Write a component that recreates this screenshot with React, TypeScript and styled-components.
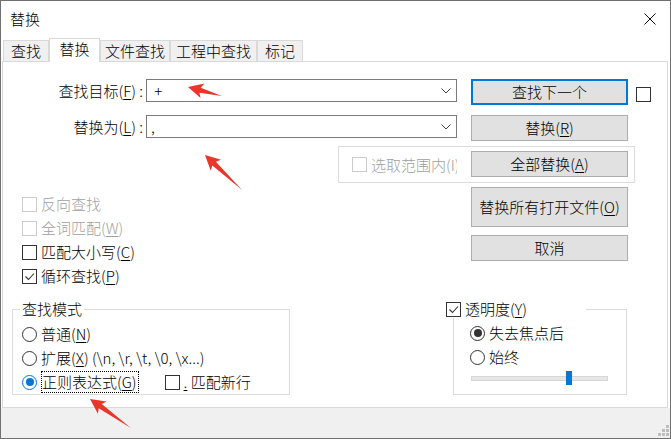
import React from 'react'
import styled, { createGlobalStyle } from 'styled-components'

const GlobalStyle = createGlobalStyle`
  html, body {
    margin: 0;
    padding: 0;
    background: #fff;
  }
  body {
    font-family: "Noto Sans CJK SC", "Noto Sans", sans-serif;
    font-size: 15px;
    font-weight: 300;
    color: #000;
  }
`

const tabs = [
  { label: '查找', width: 46 },
  { label: '替换', width: 51, selected: true },
  { label: '文件查找', width: 70 },
  { label: '工程中查找', width: 87 },
  { label: '标记', width: 46 },
]

const arrows = [
  { x: 188, y: 87, angle: 14.8, length: 35 },
  { x: 205, y: 155, angle: 43.4, length: 51 },
  { x: 90, y: 399, angle: 35.3, length: 50 },
]

const Key = ({ k }: { k: string }) => (
  <>
    (<Mnemonic>{k}</Mnemonic>)
  </>
)

const Check = ({ checked, disabled }: { checked?: boolean; disabled?: boolean }) => (
  <CheckBox $disabled={disabled}>
    {checked && (
      <svg width='13' height='13' viewBox='0 0 13 13'>
        <polyline points='2.5,6.5 5.5,9.5 11,3.5' fill='none' stroke='#333' strokeWidth='1.1' />
      </svg>
    )}
  </CheckBox>
)

const App = () => {
  const opacity = 0.72

  return (
    <>
      <GlobalStyle />
      <Window>
        <TitleBar>
          <Title>替换</Title>
          <CloseButton aria-label='close'>
            <svg width='12' height='12' viewBox='0 0 12 12'>
              <path d='M0.5 0.5 L11.5 11.5 M11.5 0.5 L0.5 11.5' stroke='#111' strokeWidth='1' />
            </svg>
          </CloseButton>
        </TitleBar>

        <TabStrip>
          {tabs.map((t) => (
            <Tab key={t.label} $width={t.width} $selected={t.selected}>
              {t.label}
            </Tab>
          ))}
        </TabStrip>

        <Panel>
          <TopRow>
            <LeftColumn>
              <FieldRow>
                <FieldLabel>
                  查找目标<Key k='F' /> :
                </FieldLabel>
                <Combo>
                  <ComboText> +</ComboText>
                  <Chevron />
                </Combo>
              </FieldRow>
              <FieldRow $mt={13}>
                <FieldLabel>
                  替换为<Key k='L' /> :
                </FieldLabel>
                <Combo>
                  <ComboText>,</ComboText>
                  <Chevron />
                </Combo>
              </FieldRow>

              <ScopeGroup>
                <ScopeCheck>
                  <Check disabled />
                  <OptionText $disabled>选取范围内(I)</OptionText>
                </ScopeCheck>
              </ScopeGroup>

              <OptionList>
                <OptionRow>
                  <Check disabled />
                  <OptionText $disabled>反向查找</OptionText>
                </OptionRow>
                <OptionRow>
                  <Check disabled />
                  <OptionText $disabled>
                    全词匹配<Key k='W' />
                  </OptionText>
                </OptionRow>
                <OptionRow>
                  <Check />
                  <OptionText>
                    匹配大小写<Key k='C' />
                  </OptionText>
                </OptionRow>
                <OptionRow>
                  <Check checked />
                  <OptionText>
                    循环查找<Key k='P' />
                  </OptionText>
                </OptionRow>
              </OptionList>
            </LeftColumn>

            <ButtonColumn>
              <DialogButton $default>查找下一个</DialogButton>
              <DialogButton>
                替换<Key k='R' />
              </DialogButton>
              <DialogButton>
                全部替换<Key k='A' />
              </DialogButton>
              <DialogButton $tall>
                替换所有打开文件<Key k='O' />
              </DialogButton>
              <DialogButton $mt={-2}>取消</DialogButton>
            </ButtonColumn>

            <SideCheck>
              <Check />
            </SideCheck>
          </TopRow>

          <BottomRow>
            <ModeGroup>
              <GroupLegend>查找模式</GroupLegend>
              <RadioRow>
                <Radio />
                <OptionText>
                  普通<Key k='N' />
                </OptionText>
              </RadioRow>
              <RadioRow>
                <Radio />
                <OptionText>
                  扩展<Key k='X' /> (\n, \r, \t, \0, \x...)
                </OptionText>
              </RadioRow>
              <RadioRow>
                <Radio $checked $accent='#0078d7' />
                <FocusText>
                  正则表达式<Key k='G' />
                </FocusText>
                <NewlineCheck>
                  <Check />
                  <OptionText>
                    <Mnemonic>.</Mnemonic> 匹配新行
                  </OptionText>
                </NewlineCheck>
              </RadioRow>
            </ModeGroup>

            <OpacityGroup>
              <OpacityLegend>
                <Check checked />
                <OptionText>
                  透明度<Key k='Y' />
                </OptionText>
              </OpacityLegend>
              <RadioRow>
                <Radio $checked $accent='#333' />
                <OptionText>失去焦点后</OptionText>
              </RadioRow>
              <RadioRow>
                <Radio />
                <OptionText>始终</OptionText>
              </RadioRow>
              <SliderTrack>
                <SliderThumb style={{ left: `${Math.round(opacity * 131)}px` }} />
              </SliderTrack>
            </OpacityGroup>
          </BottomRow>
        </Panel>

        <Footer>
          <svg width='12' height='12' viewBox='0 0 12 12'>
            <rect x='9' y='0' width='3' height='3' fill='#bdbdbd' />
            <rect x='5' y='4' width='3' height='3' fill='#bdbdbd' />
            <rect x='9' y='4' width='3' height='3' fill='#bdbdbd' />
            <rect x='1' y='8' width='3' height='3' fill='#bdbdbd' />
            <rect x='5' y='8' width='3' height='3' fill='#bdbdbd' />
            <rect x='9' y='8' width='3' height='3' fill='#bdbdbd' />
          </svg>
        </Footer>

        <ArrowLayer width='671' height='439' viewBox='0 0 671 439'>
          {arrows.map((a, i) => (
            <polygon
              key={i}
              transform={`translate(${a.x} ${a.y}) rotate(${a.angle})`}
              points={`0,0 15,-7.5 12.5,-2.6 ${a.length},0 12.5,2.6 15,7.5`}
              fill='#e8362a'
            />
          ))}
        </ArrowLayer>
      </Window>
    </>
  )
}

const Window = styled.div`
  position: relative;
  width: 671px;
  height: 439px;
  box-sizing: border-box;
  border: 1px solid #707070;
  background: #fff;
  display: flex;
  flex-direction: column;
  overflow: hidden;
`

const TitleBar = styled.div`
  height: 36px;
  flex: none;
  display: flex;
  align-items: center;
  justify-content: space-between;
  padding: 0 14px 0 9px;
`

const Title = styled.span`
  font-size: 15px;
  line-height: 20px;
`

const CloseButton = styled.button`
  border: 0;
  background: transparent;
  padding: 0;
  width: 12px;
  height: 12px;
  display: flex;
`

const TabStrip = styled.div`
  height: 24px;
  flex: none;
  display: flex;
  align-items: flex-end;
  padding-left: 2px;
`

const Tab = styled.div<{ $width: number; $selected?: boolean }>`
  position: relative;
  z-index: ${(p) => (p.$selected ? 1 : 0)};
  box-sizing: border-box;
  width: ${(p) => p.$width}px;
  height: ${(p) => (p.$selected ? 24 : 21)}px;
  margin-bottom: ${(p) => (p.$selected ? -1 : 0)}px;
  padding-bottom: ${(p) => (p.$selected ? 3 : 0)}px;
  border: 1px solid #d9d9d9;
  border-bottom: none;
  background: ${(p) => (p.$selected ? '#fff' : '#f0f0f0')};
  display: flex;
  align-items: center;
  justify-content: center;
  font-size: 15px;
  line-height: 18px;
  white-space: nowrap;
`

const Panel = styled.div`
  flex: 1;
  margin: 0 2px 0 1px;
  border: 1px solid #d9d9d9;
  padding-top: 17px;
  display: flex;
  flex-direction: column;
`

const TopRow = styled.div`
  display: flex;
  align-items: flex-start;
`

const LeftColumn = styled.div`
  width: 454px;
  flex: none;
  display: flex;
  flex-direction: column;
`

const FieldRow = styled.div<{ $mt?: number }>`
  display: flex;
  align-items: center;
  height: 23px;
  margin-top: ${(p) => p.$mt ?? 0}px;
`

const FieldLabel = styled.span`
  width: 140px;
  flex: none;
  text-align: right;
  line-height: 20px;
  white-space: pre;
`

const Combo = styled.div`
  width: 311px;
  height: 23px;
  margin-left: 3px;
  box-sizing: border-box;
  border: 1px solid #7a7a7a;
  background: #fff;
  display: flex;
  align-items: center;
  justify-content: space-between;
  padding: 0 5px 0 4px;
`

const ComboText = styled.span`
  white-space: pre;
  line-height: 20px;
`

const Chevron = () => (
  <svg width='10' height='6' viewBox='0 0 10 6'>
    <polyline points='0.5,0.5 5,5 9.5,0.5' fill='none' stroke='#444' strokeWidth='1' />
  </svg>
)

const ScopeGroup = styled.div`
  margin: 8px 0 0 335px;
  width: 297px;
  height: 37px;
  flex: none;
  box-sizing: border-box;
  border: 1px solid #dcdcdc;
  padding-left: 13px;
  display: flex;
  align-items: center;
`

const ScopeCheck = styled.div`
  width: 105px;
  overflow: hidden;
  white-space: nowrap;
  display: flex;
  align-items: center;
  gap: 4px;
`

const OptionList = styled.div`
  margin: 9px 0 0 19px;
  display: flex;
  flex-direction: column;
`

const OptionRow = styled.div`
  height: 24px;
  display: flex;
  align-items: center;
  gap: 4px;
`

const OptionText = styled.span<{ $disabled?: boolean }>`
  line-height: 20px;
  white-space: pre;
  color: ${(p) => (p.$disabled ? '#a0a0a0' : '#000')};
`

const Mnemonic = styled.u`
  text-underline-offset: 2px;
`

const CheckBox = styled.span<{ $disabled?: boolean }>`
  width: 15px;
  height: 15px;
  flex: none;
  box-sizing: border-box;
  border: 1px solid ${(p) => (p.$disabled ? '#cccccc' : '#333')};
  background: #fff;
  display: flex;
  align-items: center;
  justify-content: center;
`

const ButtonColumn = styled.div`
  position: relative;
  z-index: 1;
  width: 157px;
  flex: none;
  margin-left: 14px;
  display: flex;
  flex-direction: column;
  gap: 10px;
`

const DialogButton = styled.button<{ $default?: boolean; $tall?: boolean; $mt?: number }>`
  height: ${(p) => (p.$tall ? 40 : 26)}px;
  margin-top: ${(p) => p.$mt ?? 0}px;
  box-sizing: border-box;
  border: ${(p) => (p.$default ? '2px solid #0078d7' : '1px solid #adadad')};
  background: #e1e1e1;
  font-family: inherit;
  font-size: 15px;
  font-weight: inherit;
  line-height: 20px;
  color: #000;
  padding: 0;
  white-space: nowrap;
`

const SideCheck = styled.div`
  margin: 8px 0 0 8px;
`

const BottomRow = styled.div`
  margin-top: 12px;
  display: flex;
  align-items: flex-start;
`

const GroupBox = styled.fieldset`
  margin: 0;
  min-width: 0;
  height: 95px;
  box-sizing: border-box;
  border: 1px solid #dcdcdc;
`

const ModeGroup = styled(GroupBox)`
  width: 278px;
  margin-left: 9px;
  padding: 4px 0 0 9px;
`

const GroupLegend = styled.legend`
  padding: 0 2px;
  margin-left: -2px;
  line-height: 18px;
  font-size: 15px;
`

const RadioRow = styled.div`
  height: 24px;
  display: flex;
  align-items: center;
  gap: 4px;
`

const Radio = styled.span<{ $checked?: boolean; $accent?: string }>`
  width: 15px;
  height: 15px;
  flex: none;
  box-sizing: border-box;
  border-radius: 50%;
  border: 1px solid ${(p) => (p.$checked ? p.$accent : '#333')};
  background: #fff;
  display: flex;
  align-items: center;
  justify-content: center;

  &::after {
    content: '';
    display: ${(p) => (p.$checked ? 'block' : 'none')};
    width: 8px;
    height: 8px;
    border-radius: 50%;
    background: ${(p) => p.$accent};
  }
`

const FocusText = styled.span`
  border: 1px dotted #000;
  line-height: 20px;
  white-space: pre;
  padding-right: 1px;
`

const NewlineCheck = styled.span`
  margin-left: 22px;
  display: flex;
  align-items: center;
  gap: 4px;
`

const OpacityGroup = styled(GroupBox)`
  width: 174px;
  margin-left: 163px;
  padding: 3px 0 0 16px;
`

const OpacityLegend = styled.legend`
  width: 140px;
  margin-left: -24px;
  padding: 0;
  height: 18px;
  display: flex;
  align-items: center;
  gap: 4px;
  background: #fff;
`

const SliderTrack = styled.div`
  position: relative;
  width: 137px;
  height: 5px;
  margin: 7px 0 0 1px;
  box-sizing: border-box;
  border: 1px solid #d6d6d6;
  background: #e7e7e7;
`

const SliderThumb = styled.div`
  position: absolute;
  top: -6px;
  width: 6px;
  height: 14px;
  background: #0078d7;
`

const Footer = styled.div`
  height: 29px;
  flex: none;
  background: #f0f0f0;
  display: flex;
  justify-content: flex-end;
  align-items: flex-end;
  padding: 0 1px 1px 0;
`

const ArrowLayer = styled.svg`
  position: absolute;
  top: -1px;
  left: -1px;
  pointer-events: none;
`

export default App
